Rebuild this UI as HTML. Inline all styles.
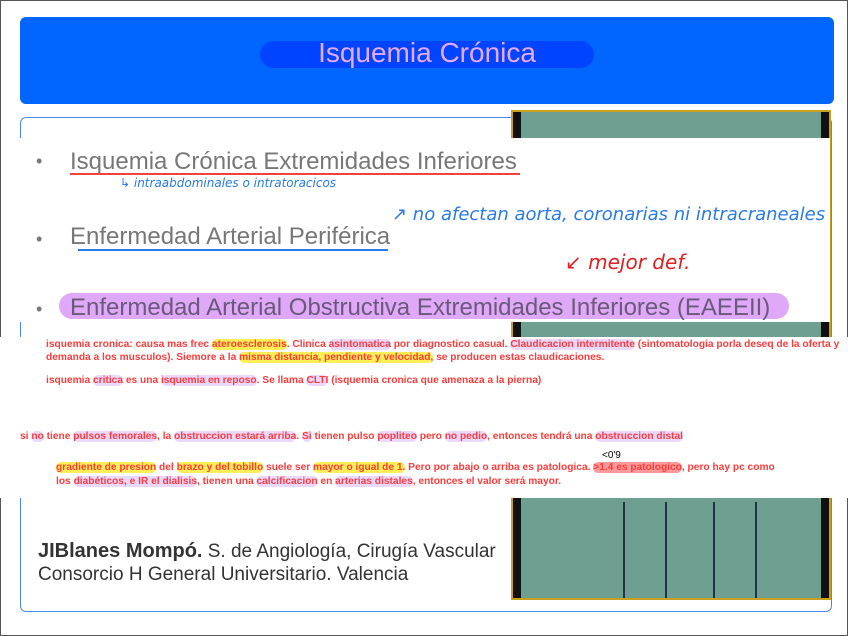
<!DOCTYPE html>
<html><head><meta charset="utf-8"><style>
body{margin:0;width:848px;height:636px;position:relative;overflow:hidden;background:#fff;font-family:"Liberation Sans",sans-serif}
.a{position:absolute}
.frame{left:0;top:0;width:846px;height:634px;border:1px solid #555}
.hdr{left:20px;top:17px;width:814px;height:87px;background:#0066ff;border-radius:6px}
.pill{left:260px;top:41px;width:334px;height:27px;background:#0044ff;border-radius:14px}
.title{left:200px;top:37px;width:454px;text-align:center;color:#e8a8f8;font-size:28px;line-height:32px}
.box{left:20px;top:117px;width:810px;height:493px;border:1.5px solid #4a8af0;border-radius:6px}
.img{left:511px;top:110px;width:320px;height:490px;background:#6f9f90;border:2px solid #c8a020;box-sizing:border-box}
.img:before{content:"";position:absolute;left:0;top:0;width:8px;height:100%;background:#111}
.img:after{content:"";position:absolute;right:0;top:0;width:8px;height:100%;background:#111}
.w1{left:20px;top:138px;width:810px;height:184px;background:#fff}
.w2{left:0;top:337px;width:848px;height:161px;background:#fff}
.b{font-size:24px;color:#777;white-space:nowrap}
.dot{font-size:18px;color:#777}
.hand{font-family:"DejaVu Sans",sans-serif;font-style:italic;color:#2a7ae8;white-space:nowrap}
.r{font-size:10.2px;font-weight:bold;color:#ff3b3b;white-space:nowrap;line-height:16px}
.y{background:#ffee55;border-radius:5px}
.p{background:#ead8ff;border-radius:5px}
.k{background:#ff9a9a;border-radius:5px}
.foot{font-size:19px;color:#333}
</style></head><body>
<div class="a frame"></div>
<div class="a hdr"></div>
<div class="a pill"></div>
<div class="a title">Isquemia Crónica</div>
<div class="a box"></div>
<div class="a img">
<div class="a" style="left:110px;top:390px;width:40px;height:96px;border-left:2px solid #234;border-right:2px solid #234"></div>
<div class="a" style="left:200px;top:390px;width:40px;height:96px;border-left:2px solid #234;border-right:2px solid #234"></div>
</div>
<div class="a w1"></div>
<div class="a w2"></div>

<div class="a dot" style="left:36px;top:151px">•</div>
<div class="a b" style="left:70px;top:148px">Isquemia Crónica Extremidades Inferiores</div>
<div class="a" style="left:70px;top:173px;width:450px;height:2px;background:#f04040"></div>
<div class="a hand" style="left:120px;top:176px;font-size:12px">↳ intraabdominales o intratoracicos</div>

<div class="a dot" style="left:36px;top:229px">•</div>
<div class="a b" style="left:70px;top:223px">Enfermedad Arterial Periférica</div>
<div class="a" style="left:78px;top:249px;width:310px;height:2px;background:#2a7ae8"></div>
<div class="a hand" style="left:392px;top:204px;font-size:18px">↗ no afectan aorta, coronarias ni intracraneales</div>

<div class="a" style="left:59px;top:293px;width:730px;height:26px;background:#e0a8f8;border-radius:13px"></div>
<div class="a dot" style="left:36px;top:299px">•</div>
<div class="a b" style="left:70px;top:294px;color:#6a5a7a">Enfermedad Arterial Obstructiva Extremidades Inferiores (EAEEII)</div>
<div class="a hand" style="left:565px;top:250px;font-size:20px;color:#e02020">↙ mejor def.</div>

<div class="a r" style="left:46px;top:337px">isquemia cronica: causa mas frec <span class="y">ateroesclerosis</span>. Clinica <span class="p">asintomatica</span> por diagnostico casual. <span class="p">Claudicacion intermitente</span> (sintomatologia porla deseq de la oferta y</div>
<div class="a r" style="left:46px;top:350px">demanda a los musculos). Siemore a la <span class="y">misma distancia, pendiente y velocidad,</span> se producen estas claudicaciones.</div>
<div class="a r" style="left:46px;top:373px">isquemia <span class="p">critica</span> es una <span class="p">isquemia en reposo</span>. Se llama <span class="p">CLTI</span> (isquemia cronica que amenaza a la pierna)</div>
<div class="a r" style="left:20px;top:429px">si <span class="p">no</span> tiene <span class="p">pulsos femorales</span>, la <span class="p">obstruccion estará arriba</span>. <span class="p">Si</span> tienen pulso <span class="p">popliteo</span> pero <span class="p">no pedio</span>, entonces tendrá una <span class="p">obstruccion distal</span></div>
<div class="a" style="left:602px;top:450px;font-size:10px;color:#000">&lt;0'9</div>
<div class="a r" style="left:56px;top:460px"><span class="y">gradiente de presion</span> del <span class="y">brazo y del tobillo</span> suele ser <span class="y">mayor o igual de 1.</span> Pero por abajo o arriba es patologica. <span class="k">&gt;1.4 es patologico</span>, pero hay pc como</div>
<div class="a r" style="left:56px;top:474px">los <span class="p">diabéticos, e IR el dialisis</span>, tienen una <span class="p">calcificacion</span> en <span class="p">arterias distales</span>, entonces el valor será mayor.</div>

<div class="a foot" style="left:38px;top:540px;white-space:nowrap"><b style="font-size:20px">JIBlanes Mompó.</b> S. de Angiología, Cirugía Vascular</div>
<div class="a foot" style="left:38px;top:564px;white-space:nowrap">Consorcio H General Universitario. Valencia</div>
</body></html>
